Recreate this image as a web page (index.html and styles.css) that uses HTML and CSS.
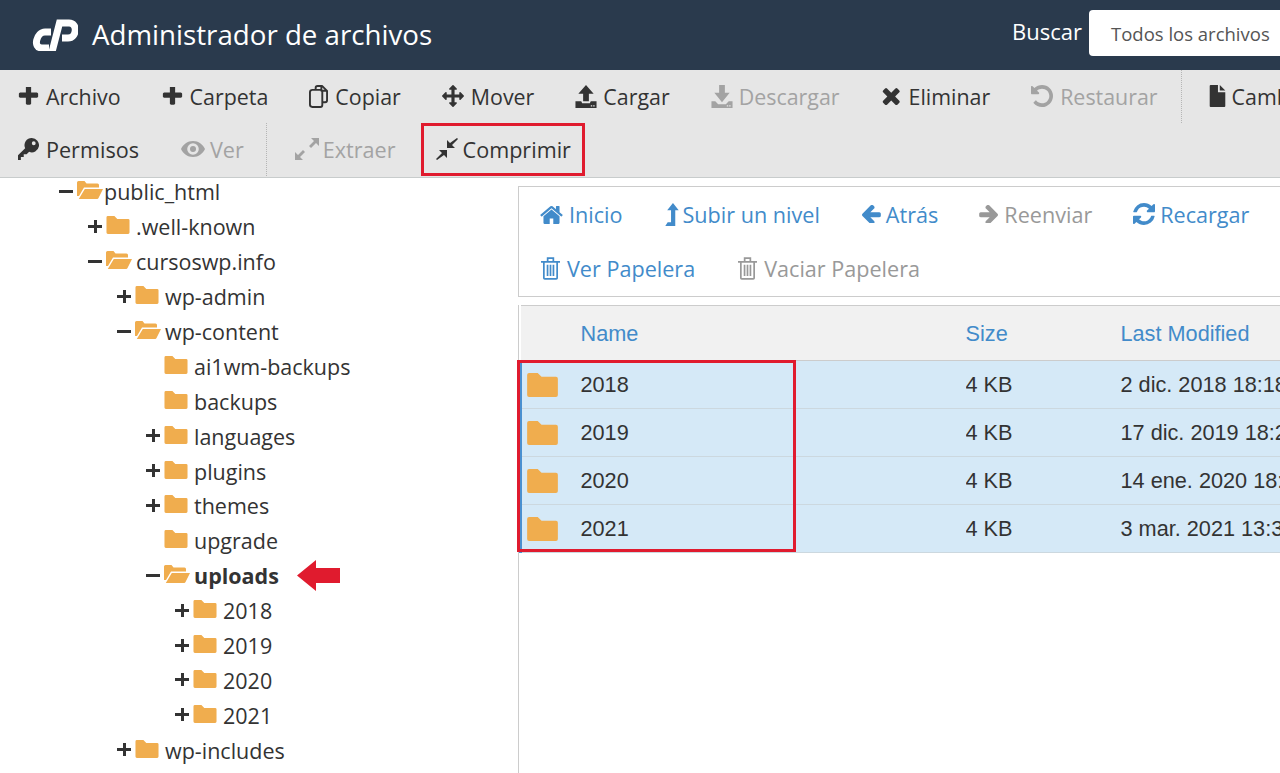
FILE: index.html
```html
<!DOCTYPE html>
<html lang="es">
<head>
    <meta charset="UTF-8">
    <meta name="viewport" content="width=device-width, initial-scale=1.0">
    <title>Administrador de archivos</title>
    <link rel="stylesheet" href="styles.css">
</head>
<body>

<!-- Icon sprite -->
<svg class="sprite" xmlns="http://www.w3.org/2000/svg">
    <symbol id="i-plus" viewBox="128 256 1536 1280"><path d="M1600 736v192q0 40-28 68t-68 28h-416v416q0 40-28 68t-68 28h-192q-40 0-68-28t-28-68v-416h-416q-40 0-68-28t-28-68v-192q0-40 28-68t68-28h416v-416q0-40 28-68t68-28h192q40 0 68 28t28 68v416h416q40 0 68 28t28 68z"/></symbol>
    <symbol id="i-close" viewBox="180 220 1400 1400"><path d="M1490 1322q0 40-28 68l-136 136q-28 28-68 28t-68-28l-294-294-294 294q-28 28-68 28t-68-28l-136-136q-28-28-28-68t28-68l294-294-294-294q-28-28-28-68t28-68l136-136q28-28 68-28t68 28l294 294 294-294q28-28 68-28t68 28l136 136q28 28 28 68t-28 68l-294 294 294 294q28 28 28 68z"/></symbol>
    <symbol id="i-home" viewBox="0 128 1792 1472"><path d="M1472 992v480q0 26-19 45t-45 19h-384v-384h-256v384h-384q-26 0-45-19t-19-45v-480q0-1 .5-3t.5-3l575-474 575 474q1 2 1 6zm223-69l-62 74q-8 9-21 11h-3q-13 0-21-7l-692-577-692 577q-12 8-24 7-13-2-21-11l-62-74q-8-10-7-23.500t11-21.500l719-599q32-26 76-26t76 26l244 204v-195q0-14 9-23t23-9h192q14 0 23 9t9 23v408l219 182q10 8 11 21.500t-7 23.500z"/></symbol>
    <symbol id="i-left" viewBox="128 192 1536 1408"><path d="M1664 896v128q0 53-32.500 90.500t-84.500 37.500h-704l293 294q38 36 38 90t-38 90l-75 76q-37 37-90 37-52 0-91-37l-651-652q-37-37-37-90 0-52 37-91l651-650q38-38 91-38 52 0 90 38l75 74q38 38 38 91t-38 91l-293 293h704q52 0 84.500 37.500t32.500 90.500z"/></symbol>
    <symbol id="i-right" viewBox="128 192 1536 1408"><path d="M1600 960q0 54-37 91l-651 651q-39 37-91 37-51 0-90-37l-75-75q-38-38-38-91t38-91l293-293h-704q-52 0-84.500-37.500t-32.500-90.500v-128q0-53 32.500-90.500t84.500-37.500h704l-293-294q-38-36-38-90t38-90l75-75q38-38 90-38 53 0 91 38l651 651q37 35 37 90z"/></symbol>
    <symbol id="i-refresh" viewBox="128 128 1536 1536"><path d="M1639 1056q0 5-1 7-64 268-268 434.500t-478 166.500q-146 0-282.500-55t-243.500-157l-129 129q-19 19-45 19t-45-19-19-45v-448q0-26 19-45t45-19h448q26 0 45 19t19 45-19 45l-137 137q71 66 161 102t187 36q134 0 250-65t186-179q11-17 53-117 8-23 30-23h192q13 0 22.500 9.500t9.500 22.500zm25-800v448q0 26-19 45t-45 19h-448q-26 0-45-19t-19-45 19-45l138-138q-148-137-349-137-134 0-250 65t-186 179q-11 17-53 117-8 23-30 23h-199q-13 0-22.500-9.500t-9.500-22.500v-7q65-268 270-434.500t480-166.500q146 0 284 55.500t245 156.500l130-129q19-19 45-19t45 19 19 45z"/></symbol>
    <symbol id="i-undo" viewBox="128 128 1536 1536"><path d="M1664 896q0 156-61 298t-164 245-245 164-298 61q-172 0-327-72.500t-264-204.500q-7-10-6.500-22.500t8.500-20.500l137-138q10-9 25-9 16 2 23 12 73 95 179 147t225 52q104 0 198.500-40.500t163.500-109.500 109.500-163.500 40.500-198.500-40.500-198.500-109.500-163.500-163.500-109.500-198.500-40.500q-98 0-188 35.500t-160 101.500l137 138q31 30 14 69-17 40-59 40h-448q-26 0-45-19t-19-45v-448q0-42 40-59 39-17 69 14l130 129q107-101 244.500-156.500t284.500-55.500q156 0 298 61t245 164 164 245 61 298z"/></symbol>
    <symbol id="i-move" viewBox="0 0 1792 1792"><path d="M1792 896q0 26-19 45l-256 256q-19 19-45 19t-45-19-19-45v-128h-384v384h128q26 0 45 19t19 45-19 45l-256 256q-19 19-45 19t-45-19l-256-256q-19-19-19-45t19-45 45-19h128v-384h-384v128q0 26-19 45t-45 19-45-19l-256-256q-19-19-19-45t19-45l256-256q19-19 45-19t45 19 19 45v128h384v-384h-128q-26 0-45-19t-19-45 19-45l256-256q19-19 45-19t45 19l256 256q19 19 19 45t-19 45-45 19h-128v384h384v-128q0-26 19-45t45-19 45 19l256 256q19 19 19 45z"/></symbol>
    <symbol id="i-copy" viewBox="0 0 20 24"><path fill="none" stroke="currentColor" stroke-width="2" stroke-linejoin="round" d="M7 5V3a2 2 0 0 1 2-2h5l5 5v10a2 2 0 0 1-2 2h-3M13 1v5h6M3.500 5H12a2 2 0 0 1 2 2v14a2 2 0 0 1-2 2H3.500a2.500 2.500 0 0 1-2.500-2.500v-13A2.500 2.500 0 0 1 3.500 5z"/></symbol>
    <symbol id="i-upload" viewBox="0 0 22 24"><path fill-rule="evenodd" d="M11 0l8 9h-5v8H8V9H3zM0 17h6l1 2h8l1-2h6v7H0zM16 21h1.500v1.500H16zM18.500 21H20v1.500h-1.500z"/></symbol>
    <symbol id="i-download" viewBox="0 0 22 24"><path fill-rule="evenodd" d="M8 0h6v8h5l-8 10L3 8h5zM0 17h4l3 3h8l3-3h4v7H0zM16 21h1.500v1.500H16zM18.500 21H20v1.500h-1.500z"/></symbol>
    <symbol id="i-file" viewBox="0 0 17 24"><path d="M0 1a1 1 0 0 1 1-1h8v8h8v15a1 1 0 0 1-1 1H1a1 1 0 0 1-1-1zM11 0l6 6h-6z"/></symbol>
    <symbol id="i-key" viewBox="0 0 22 23"><path d="M14.500 0a7.500 7.500 0 1 1-2.800 14.460L9 17H6v3H3v3H0v-5l7.500-7.300A7.500 7.500 0 0 1 14.500 0zm2 3.500a2 2 0 1 0 0 4 2 2 0 0 0 0-4z"/></symbol>
    <symbol id="i-eye" viewBox="0 0 24 16"><path fill-rule="evenodd" d="M12 0c5.500 0 9.800 3.500 12 8-2.200 4.500-6.500 8-12 8S2.200 12.500 0 8c2.200-4.500 6.500-8 12-8zm0 2.200a5.800 5.800 0 1 0 0 11.600 5.800 5.800 0 0 0 0-11.600zM12 5a3 3 0 1 1 0 6 3 3 0 0 1 0-6z"/></symbol>
    <symbol id="i-expand" viewBox="0 0 24 22"><path d="M16 0h8v8l-3-3-5 5-2-2 5-5zM8 22H0v-8l3 3 5-5 2 2-5 5z"/></symbol>
    <symbol id="i-compress" viewBox="0 0 22 22"><path d="M21 0l1 1-6 6 3 3h-8V2l3 3zM1 22l-1-1 6-6-3-3h8v8l-3-3z"/></symbol>
    <symbol id="i-level-up" viewBox="0 0 14 24"><path d="M8 0l6 7.500h-3.600V24H0l2.500-4h3.500V7.500H2z"/></symbol>
    <symbol id="i-trash" viewBox="0 0 20 25"><path fill="none" stroke="currentColor" stroke-width="1.800" d="M3 7v16a1 1 0 0 0 1 1h12a1 1 0 0 0 1-1V7M0 6h20M7 5V2h6v3"/><path d="M6 9h1.800v12H6zM9.100 9h1.800v12H9.100zM12.200 9H14v12h-1.800z"/></symbol>
    <symbol id="i-folder" viewBox="0 0 32 25"><path d="M2 0h9l4 4h15a2 2 0 0 1 2 2v17a2 2 0 0 1-2 2H2a2 2 0 0 1-2-2V2a2 2 0 0 1 2-2z"/></symbol>
    <symbol id="i-folder-open" viewBox="0 0 26 18"><path d="M1.500 0h6l2 2.500h11a1.500 1.500 0 0 1 1.500 1.500v2.500H7l-5 8.500H0V1.500A1.500 1.500 0 0 1 1.500 0zM7.800 8H26l-4.500 9a1.500 1.500 0 0 1-1.300 1H1.800z"/></symbol>
</svg>

<header class="top-bar">
    <svg class="logo" viewBox="0 0 47 32"><path fill="none" stroke="#fff" stroke-width="7" d="M20 13h-6C6 13 1 29 11 29h7M21 33L28.500 4H38c9 0 8 15-1 15h-6"/></svg>
    <div class="app-title">Administrador de archivos</div>
    <div class="search-label">Buscar</div>
    <div class="search-select">Todos los archivos</div>
</header>

<nav class="toolbar">
    <div class="tool-row">
        <a class="tool"><svg class="ic ic-plus"><use href="#i-plus"/></svg>Archivo</a>
        <a class="tool"><svg class="ic ic-plus"><use href="#i-plus"/></svg>Carpeta</a>
        <a class="tool"><svg class="ic ic-copy"><use href="#i-copy"/></svg>Copiar</a>
        <a class="tool"><svg class="ic ic-move"><use href="#i-move"/></svg>Mover</a>
        <a class="tool"><svg class="ic ic-tray"><use href="#i-upload"/></svg>Cargar</a>
        <a class="tool off"><svg class="ic ic-tray"><use href="#i-download"/></svg>Descargar</a>
        <a class="tool"><svg class="ic ic-close"><use href="#i-close"/></svg>Eliminar</a>
        <a class="tool off"><svg class="ic ic-undo"><use href="#i-undo"/></svg>Restaurar</a>
        <span class="tool-sep"></span>
        <a class="tool"><svg class="ic ic-file"><use href="#i-file"/></svg>Cambiar nombre</a>
    </div>
    <div class="tool-row">
        <a class="tool"><svg class="ic ic-key"><use href="#i-key"/></svg>Permisos</a>
        <a class="tool off"><svg class="ic ic-eye"><use href="#i-eye"/></svg>Ver</a>
        <span class="tool-sep"></span>
        <a class="tool off"><svg class="ic ic-expand"><use href="#i-expand"/></svg>Extraer</a>
        <a class="tool marked"><svg class="ic ic-compress"><use href="#i-compress"/></svg>Comprimir</a>
    </div>
</nav>

<main class="content">
    <!-- Folder tree -->
    <section class="tree-pane">
        <ul class="tree">
            <li>
                <div class="node root"><span class="toggle minus"></span><svg class="folder open"><use href="#i-folder-open"/></svg>public_html</div>
                <ul>
                    <li><div class="node"><span class="toggle plus"></span><svg class="folder"><use href="#i-folder"/></svg>.well-known</div></li>
                    <li>
                        <div class="node"><span class="toggle minus"></span><svg class="folder open"><use href="#i-folder-open"/></svg>cursoswp.info</div>
                        <ul>
                            <li><div class="node"><span class="toggle plus"></span><svg class="folder"><use href="#i-folder"/></svg>wp-admin</div></li>
                            <li>
                                <div class="node"><span class="toggle minus"></span><svg class="folder open"><use href="#i-folder-open"/></svg>wp-content</div>
                                <ul>
                                    <li><div class="node"><span class="toggle"></span><svg class="folder"><use href="#i-folder"/></svg>ai1wm-backups</div></li>
                                    <li><div class="node"><span class="toggle"></span><svg class="folder"><use href="#i-folder"/></svg>backups</div></li>
                                    <li><div class="node"><span class="toggle plus"></span><svg class="folder"><use href="#i-folder"/></svg>languages</div></li>
                                    <li><div class="node"><span class="toggle plus"></span><svg class="folder"><use href="#i-folder"/></svg>plugins</div></li>
                                    <li><div class="node"><span class="toggle plus"></span><svg class="folder"><use href="#i-folder"/></svg>themes</div></li>
                                    <li><div class="node"><span class="toggle"></span><svg class="folder"><use href="#i-folder"/></svg>upgrade</div></li>
                                    <li>
                                        <div class="node current"><span class="toggle minus"></span><svg class="folder open"><use href="#i-folder-open"/></svg>uploads<svg class="red-arrow" viewBox="0 0 43 31"><path d="M0 15.500L19 0v8h24v15H19v8z"/></svg></div>
                                        <ul>
                                            <li><div class="node"><span class="toggle plus"></span><svg class="folder"><use href="#i-folder"/></svg>2018</div></li>
                                            <li><div class="node"><span class="toggle plus"></span><svg class="folder"><use href="#i-folder"/></svg>2019</div></li>
                                            <li><div class="node"><span class="toggle plus"></span><svg class="folder"><use href="#i-folder"/></svg>2020</div></li>
                                            <li><div class="node"><span class="toggle plus"></span><svg class="folder"><use href="#i-folder"/></svg>2021</div></li>
                                        </ul>
                                    </li>
                                </ul>
                            </li>
                            <li><div class="node"><span class="toggle plus"></span><svg class="folder"><use href="#i-folder"/></svg>wp-includes</div></li>
                        </ul>
                    </li>
                </ul>
            </li>
        </ul>
    </section>

    <!-- File list -->
    <section class="files-pane">
        <div class="file-nav">
            <div class="nav-row">
                <a class="nav-link"><svg class="ic ic-home"><use href="#i-home"/></svg>Inicio</a>
                <a class="nav-link"><svg class="ic ic-level"><use href="#i-level-up"/></svg>Subir un nivel</a>
                <a class="nav-link"><svg class="ic ic-arrow"><use href="#i-left"/></svg>Atrás</a>
                <a class="nav-link off"><svg class="ic ic-arrow"><use href="#i-right"/></svg>Reenviar</a>
                <a class="nav-link"><svg class="ic ic-refresh"><use href="#i-refresh"/></svg>Recargar</a>
            </div>
            <div class="nav-row">
                <a class="nav-link"><svg class="ic ic-trash"><use href="#i-trash"/></svg>Ver Papelera</a>
                <a class="nav-link off"><svg class="ic ic-trash"><use href="#i-trash"/></svg>Vaciar Papelera</a>
            </div>
        </div>

        <div class="file-list">
            <table class="file-table">
                <thead>
                    <tr><th class="col-icon"></th><th class="col-name">Name</th><th class="col-size">Size</th><th class="col-date">Last Modified</th></tr>
                </thead>
                <tbody>
                    <tr><td><svg class="row-folder"><use href="#i-folder"/></svg></td><td>2018</td><td>4 KB</td><td>2 dic. 2018 18:18</td></tr>
                    <tr><td><svg class="row-folder"><use href="#i-folder"/></svg></td><td>2019</td><td>4 KB</td><td>17 dic. 2019 18:25</td></tr>
                    <tr><td><svg class="row-folder"><use href="#i-folder"/></svg></td><td>2020</td><td>4 KB</td><td>14 ene. 2020 18:05</td></tr>
                    <tr><td><svg class="row-folder"><use href="#i-folder"/></svg></td><td>2021</td><td>4 KB</td><td>3 mar. 2021 13:30</td></tr>
                </tbody>
            </table>
            <div class="row-highlight"></div>
        </div>
    </section>
</main>

</body>
</html>
```
FILE: styles.css
```css
* {
    box-sizing: border-box;
}

body {
    font-family: 'Open Sans', sans-serif;
    margin: 0;
    width: 1280px;
    height: 773px;
    overflow: hidden;
    background-color: #fff;
    color: #333;
}

.sprite {
    display: none;
}

.ic {
    flex: none;
    fill: currentColor;
}

/* Top bar */
.top-bar {
    display: flex;
    align-items: center;
    height: 70px;
    padding-left: 31px;
    background-color: #2a3a4d;
    color: #fff;
}

.logo {
    width: 47px;
    height: 32px;
    margin: -1px 14px 0 0;
}

.app-title {
    font-size: 27.700px;
    flex: 1;
    margin-top: -2px;
}

.search-label {
    font-size: 22px;
    margin: -9px 7px 0 0;
}

.search-select {
    width: 191px;
    height: 46px;
    padding: 11px 0 0 22px;
    margin-top: -5px;
    background-color: #fff;
    border-radius: 4px 0 0 4px;
    color: #555;
    font-size: 18.500px;
    white-space: nowrap;
    overflow: hidden;
}

/* Toolbar */
.toolbar {
    height: 108px;
    padding-left: 18px;
    background-color: #e6e6e6;
    border-bottom: 1px solid #c8cccc;
    overflow: hidden;
}

.tool-row {
    display: flex;
    height: 53px;
}

.tool {
    display: flex;
    align-items: center;
    flex: none;
    margin-right: 41px;
    padding-bottom: 1px;
    font-size: 21.400px;
    white-space: nowrap;
    color: #333;
}

.tool-row:last-child .tool {
    font-size: 21.600px;
}

.tool.off {
    color: #a3a3a3;
}

.tool.marked {
    margin-left: -16px;
    padding: 0 14px 1px 15px;
    outline: 3px solid #e01b2e;
    outline-offset: -3px;
}

.tool-sep {
    flex: none;
    width: 0;
    margin: 0 27px 0 -18px;
    border-left: 1px dotted #b5b5b5;
}

.tool-row:last-child .tool-sep {
    margin: 0 28px 0 -19px;
}

.ic-plus { width: 21px; height: 18px; margin-right: 7px; }
.ic-copy { width: 19px; height: 23px; margin-right: 7px; }
.ic-move { width: 22px; height: 22px; margin-right: 7px; }
.ic-tray { width: 22px; height: 23px; margin-right: 6px; }
.ic-close { width: 20px; height: 20px; margin-right: 8px; }
.ic-undo { width: 22px; height: 22px; margin-right: 7px; }
.ic-file { width: 17px; height: 22px; margin-right: 6px; }
.ic-key { width: 21px; height: 22px; margin-right: 7px; }
.ic-eye { width: 24px; height: 16px; margin: 0 5px 0 1px; }
.ic-expand { width: 24px; height: 22px; margin-right: 4px; }
.ic-compress { width: 22px; height: 22px; margin-right: 5px; }

/* Main columns */
.content {
    display: grid;
    grid-template-columns: 518px minmax(0, 1fr);
    height: 595px;
}

.tree-pane {
    overflow: hidden;
}

.tree,
.tree ul {
    list-style: none;
    margin: 0;
    padding: 0;
}

.tree {
    margin: -3.500px 0 0 59px;
}

.tree ul {
    padding-left: 29px;
}

.node {
    display: flex;
    align-items: center;
    height: 34.900px;
    font-size: 21.500px;
    white-space: nowrap;
}

.toggle {
    flex: none;
    position: relative;
    width: 18px;
    height: 16px;
}

.toggle.plus::before,
.toggle.minus::before {
    content: "";
    position: absolute;
    left: 0;
    top: 6px;
    width: 14px;
    height: 3px;
    background-color: #333;
}

.toggle.plus::after {
    content: "";
    position: absolute;
    left: 5.500px;
    top: 1px;
    width: 3px;
    height: 13px;
    background-color: #333;
}

.folder {
    flex: none;
    width: 24px;
    height: 18px;
    margin: -3px 6px 0 0;
    fill: #f0ad4e;
}

.folder.open {
    width: 26px;
    height: 18px;
    margin-right: 4px;
}

.root .folder.open {
    margin-right: 1px;
}

.current {
    font-weight: 700;
}

.red-arrow {
    width: 43px;
    height: 31px;
    margin-left: 18px;
    fill: #e01b2e;
}

/* File pane */
.files-pane {
    padding-top: 8px;
}

.file-nav {
    height: 111px;
    border: 1px solid #ccc;
    border-right: none;
}

.nav-row {
    display: flex;
    height: 54px;
    padding-left: 20px;
}

.nav-link {
    display: flex;
    align-items: center;
    margin-right: 41px;
    font-size: 21.600px;
    white-space: nowrap;
    color: #428bca;
}

.nav-link.off {
    color: #999;
}

.ic-home { width: 25px; height: 21px; margin-right: 5px; }
.ic-level { width: 14px; height: 23px; margin: 0 4px 0 1px; }
.ic-arrow { width: 20px; height: 18px; margin-right: 5px; }
.ic-refresh { width: 22px; height: 22px; margin-right: 5px; }
.ic-trash { width: 19px; height: 24px; margin-right: 7px; margin-left: 2px; }

.file-list {
    position: relative;
    height: 470px;
    margin-top: 8px;
    border-left: 1px solid #ccc;
}

.file-table {
    width: 100%;
    border-collapse: collapse;
    table-layout: fixed;
    font-family: 'Liberation Sans', Arial, sans-serif;
    font-size: 21.700px;
}

.file-table th {
    height: 55px;
    padding: 1px 0 0;
    text-align: left;
    font-weight: 400;
    color: #428bca;
    background-color: #f1f1f1;
    border-top: 1px solid #ccc;
    border-bottom: 1px solid #ccc;
}

.col-icon { width: 60px; }
.col-name { width: 385px; }
.col-size { width: 155px; }

.file-table td {
    height: 48px;
    padding: 0;
    background-color: #d5e9f7;
    border-bottom: 1px solid #ccd8df;
    white-space: nowrap;
    overflow: hidden;
}

.file-table td:first-child {
    border-left: 3px solid #4a90d0;
    padding-left: 5px;
}

.row-folder {
    display: block;
    width: 31px;
    height: 24px;
    fill: #f0ad4e;
}

.row-highlight {
    position: absolute;
    left: -2px;
    top: 55px;
    width: 279px;
    height: 192px;
    border: 3px solid #e01b2e;
}
```
